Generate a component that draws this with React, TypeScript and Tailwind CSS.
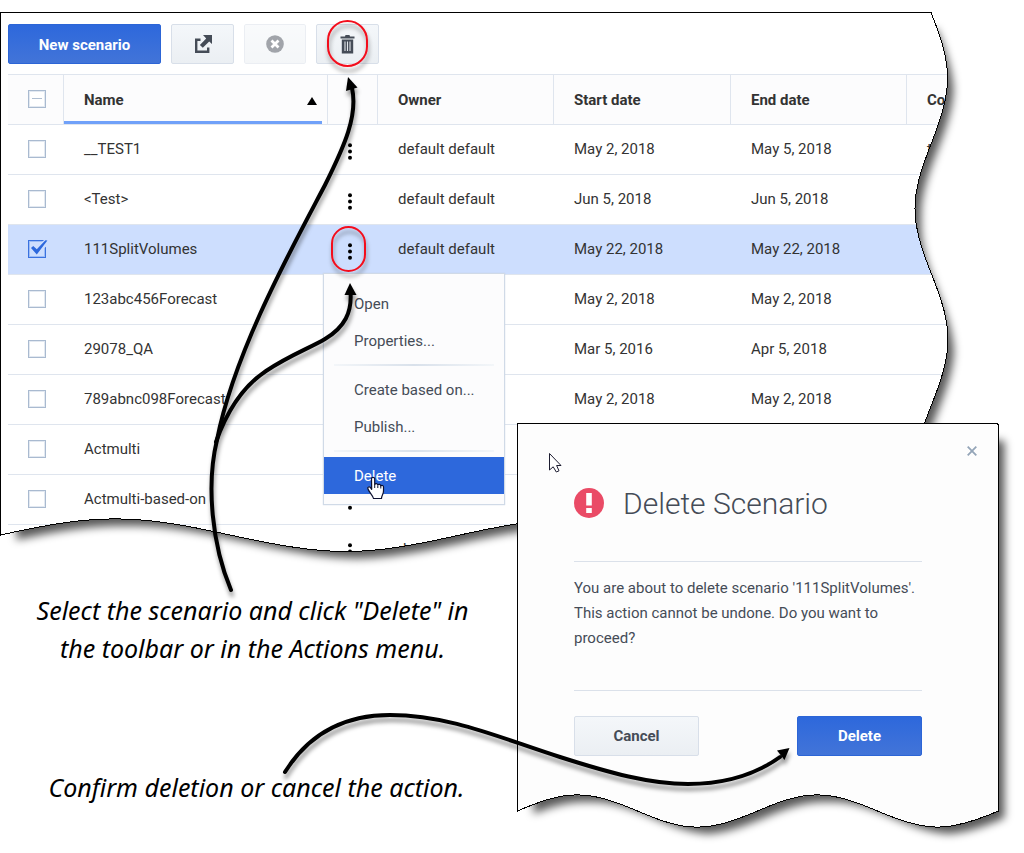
import { Fragment } from 'react';
import clsx from 'clsx';

interface Scenario {
  name: string;
  owner: string;
  start: string;
  end: string;
  comment?: string;
  selected?: boolean;
}

const scenarios: Scenario[] = [
  { name: '__TEST1', owner: 'default default', start: 'May 2, 2018', end: 'May 5, 2018', comment: 't' },
  { name: '<Test>', owner: 'default default', start: 'Jun 5, 2018', end: 'Jun 5, 2018' },
  { name: '111SplitVolumes', owner: 'default default', start: 'May 22, 2018', end: 'May 22, 2018', selected: true },
  { name: '123abc456Forecast', owner: '', start: 'May 2, 2018', end: 'May 2, 2018' },
  { name: '29078_QA', owner: '', start: 'Mar 5, 2016', end: 'Apr 5, 2018' },
  { name: '789abnc098Forecast', owner: '', start: 'May 2, 2018', end: 'May 2, 2018' },
  { name: 'Actmulti', owner: '', start: '', end: '' },
  { name: 'Actmulti-based-on', owner: '', start: '', end: '' },
  { name: '', owner: 'default default', start: '', end: '' },
];

const menuGroups = [['Open', 'Properties...'], ['Create based on...', 'Publish...'], ['Delete']];

// torn paper outlines, waves run along the right and bottom edges
const SHEET =
  'M0.5 12.5 H931 C953 67 953 88 931.5 143 C909.5 198 909.5 219 931.5 274 C953.5 329 953.5 350 931.5 405 C909.5 460 909.5 481 931.5 535 H920 C823 556.5 787 556.5 690 535 C593 513.5 557 513.5 460 535 C363 556.5 333 557.5 230 535 C133 513.5 97 513.5 0.5 535 Z';
const DIALOG =
  'M0.5 0.5 H480 L481.5 2 V388 C431 409.5 410 409.5 360.5 388 C310 366.5 290 366.5 240.5 388 C190 409.5 170 409.5 120.5 388 C70 366.5 50 366.5 0.5 388 Z';

const primaryBtn =
  'h-10 rounded-xs border border-[#2c65d6] bg-linear-to-b from-[#2d68dc] to-[#4274d8] text-[15px] font-bold text-white';
const plainBtn =
  'h-10 rounded-xs border border-[#d8dfe9] bg-linear-to-b from-[#f4f7fa] to-[#ebeff3] text-[15px] font-bold text-[#454c57]';

function PaperShadow({ d, id, className }: { d: string; id: string; className: string }) {
  return (
    <svg className={clsx('pointer-events-none absolute top-0 left-0 overflow-visible', className)} aria-hidden="true">
      <defs>
        <clipPath id={id}>
          <path d={d} />
        </clipPath>
        <filter id={`${id}-shadow`} x="-10%" y="-10%" width="120%" height="120%">
          <feMorphology operator="erode" radius="5" />
          <feOffset dx="11" dy="12" />
          <feGaussianBlur stdDeviation="4" />
        </filter>
      </defs>
      <path d={d} fill="#000" fillOpacity="0.65" filter={`url(#${id}-shadow)`} />
      <path d={d} fill="#fff" />
    </svg>
  );
}

function PaperEdge({ d, className }: { d: string; className: string }) {
  return (
    <svg className={clsx('pointer-events-none absolute top-0 left-0 overflow-visible', className)} aria-hidden="true">
      <path d={d} fill="none" stroke="#000" shapeRendering="crispEdges" />
    </svg>
  );
}

function OpenIcon() {
  return (
    <svg width="18" height="18" viewBox="1 0 18 18" aria-hidden="true">
      <path d="M7.5 4.7H3.2V16.7H15.2V12.5" fill="none" stroke="#454c57" strokeWidth="2.4" />
      <path d="M10 0H19V9L16.2 6.6L9.8 12.8L6.9 9.9L13.2 3.6Z" fill="#454c57" />
    </svg>
  );
}

function CancelIcon() {
  return (
    <svg width="18" height="18" viewBox="0 0 18 18" aria-hidden="true">
      <circle cx="9" cy="9" r="8.8" fill="#454c57" />
      <path d="M5.5 5.5L12.5 12.5M12.5 5.5L5.5 12.5" stroke="#fff" strokeWidth="2.8" />
    </svg>
  );
}

function TrashIcon() {
  return (
    <svg width="15" height="20" viewBox="0 0 15 20" aria-hidden="true">
      <path d="M0.5 2.5H5L5.5 1H9.5L10 2.5H14.5V4.5H0.5Z" fill="#454c57" />
      <path d="M1.8 5.5H13.2V19.5H1.8Z" fill="#454c57" />
      <path d="M5 7.5V17M7.5 7.5V17M10 7.5V17" stroke="#e4e8ec" strokeWidth="1.1" />
    </svg>
  );
}

function Checkbox({ label, checked, mixed }: { label: string; checked?: boolean; mixed?: boolean }) {
  return (
    <span className="relative mb-0.5 ml-5 block size-[18px]">
      <input
        type="checkbox"
        aria-label={label}
        defaultChecked={checked}
        className="block size-[18px] appearance-none border border-[#a9bad0] bg-white shadow-[inset_0_0_0_1px_#e3e9f1] checked:border-[#3a72e0] checked:bg-transparent checked:shadow-[inset_0_0_0_1px_#9dbcf5]"
      />
      {mixed && <span className="pointer-events-none absolute top-2 left-1 h-px w-[10px] bg-[#b0bfd2]" />}
      {checked && (
        <svg className="pointer-events-none absolute top-0 left-0 overflow-visible" width="20" height="18" viewBox="0 0 20 18" aria-hidden="true">
          <path d="M13 3L17 -1H19V6L15 9Z" fill="#cddefe" />
          <path d="M3 8L5.2 6L8.8 9.2L17.4 0.3L19.4 0.6L8.8 14.5Z" fill="#2d68dc" />
        </svg>
      )}
    </span>
  );
}

function ActionsMenu() {
  return (
    <div role="menu" className="absolute top-12 left-[-5px] z-10 w-[182px] border border-[#d0dae7] bg-[#fcfcfd] pt-[11px] pb-[10px] shadow-[0_0_1px_#c5d0df]">
      {menuGroups.map((group, i) => (
        <Fragment key={group[0]}>
          {i > 0 && <div className="mx-[10px] my-[5px] h-[2px] bg-linear-to-r from-[#f3f6f9] via-[#d9e1eb] to-[#f3f6f9]" />}
          {group.map((item) => (
            <button
              key={item}
              type="button"
              role="menuitem"
              className={clsx(
                'block h-[37px] w-full pt-0.5 pl-[30px] text-left text-[15px]',
                item === 'Delete' ? 'bg-[#2d68dc] text-white' : 'text-[#454c57]',
              )}
            >
              {item}
            </button>
          ))}
        </Fragment>
      ))}
    </div>
  );
}

function ScenarioTable() {
  const th = 'h-[50px] border-r border-b border-[#dfe5ee] bg-[#fcfcfd] p-0 text-left font-bold';
  const headText = 'pt-0.5 pl-5';
  const td = 'h-[50px] border-b border-[#dfe5ee] p-0';

  return (
    <table className="mt-[10px] w-full table-fixed border-separate border-spacing-0 border-t border-[#dfe5ee] text-[15px] text-[#333]">
      <colgroup>
        <col className="w-[56px]" />
        <col className="w-[264px]" />
        <col className="w-[50px]" />
        <col className="w-[176px]" />
        <col className="w-[177px]" />
        <col className="w-[176px]" />
        <col />
      </colgroup>
      <thead>
        <tr>
          <th className={th}>
            <Checkbox label="Select all" mixed />
          </th>
          <th className={th}>
            <div className="relative flex h-[49px] items-center justify-between pt-0.5 pr-[10px] pl-5">
              Name
              <svg width="10" height="8" viewBox="0 0 10 8" aria-hidden="true">
                <path d="M5 0L10 8H0Z" fill="#000" />
              </svg>
              <span className="absolute right-[5px] bottom-0 left-0 h-[3px] bg-[#70a1f9]" />
            </div>
          </th>
          <th className={th} aria-label="Actions" />
          <th className={clsx(th, headText)}>Owner</th>
          <th className={clsx(th, headText)}>Start date</th>
          <th className={clsx(th, headText)}>End date</th>
          <th className={clsx(th, headText)}>Co</th>
        </tr>
      </thead>
      <tbody>
        {scenarios.map((s, i) => (
          <tr key={i} className={clsx(s.selected && 'bg-[#cddefe]')}>
            <td className={td}>
              <Checkbox label={`Select ${s.name}`} checked={s.selected} />
            </td>
            <td className={clsx(td, 'pl-5')}>{s.name}</td>
            <td className={td}>
              <div className="relative">
                <button type="button" aria-label="Actions" className="flex h-[49px] w-11 items-center justify-center pt-1">
                  <svg width="4" height="17" viewBox="0 0 4 17" aria-hidden="true">
                    <circle cx="2" cy="2.2" r="2" />
                    <circle cx="2" cy="8.5" r="2" />
                    <circle cx="2" cy="14.8" r="2" />
                  </svg>
                </button>
                {s.selected && <ActionsMenu />}
              </div>
            </td>
            <td className={clsx(td, 'pl-5')}>{s.owner}</td>
            <td className={clsx(td, 'pl-5')}>{s.start}</td>
            <td className={clsx(td, 'pl-5')}>{s.end}</td>
            <td className={clsx(td, 'pl-5')}>{s.comment}</td>
          </tr>
        ))}
      </tbody>
    </table>
  );
}

function DeleteDialog() {
  return (
    <div role="dialog" aria-labelledby="dialog-title" className="absolute top-[423px] left-[517px] z-20 w-[482px]">
      <PaperShadow d={DIALOG} id="dialog-clip" className="h-[405px] w-[482px]" />
      <div className="relative bg-[#fdfdfd] pb-[72px] [clip-path:url(#dialog-clip)]">
        <div className="flex h-14 items-center justify-end pr-[22px]">
          <button type="button" aria-label="Close">
            <svg width="10" height="10" viewBox="0 0 10 10" aria-hidden="true">
              <path d="M0.7 0.7L9.3 9.3M9.3 0.7L0.7 9.3" stroke="#94a5b8" strokeWidth="1.8" />
            </svg>
          </button>
        </div>
        <div className="pr-[77px] pl-[57px]">
          <div className="flex h-12 items-center gap-[19px]">
            <svg width="30" height="30" viewBox="0 0 30 30" aria-hidden="true">
              <circle cx="15" cy="15" r="15" fill="#ea4b66" />
              <path d="M12.2 5H17.8V17.5H12.2ZM12.2 20H17.8V25H12.2Z" fill="#fff" />
            </svg>
            <h2 id="dialog-title" className="text-[30px] font-light text-[#454c57]">Delete Scenario</h2>
          </div>
          <p className="mt-[34px] border-t border-[#dbe1ea] pt-[14px] text-[15px] leading-[25px] text-[#454c57]">
            You are about to delete scenario '111SplitVolumes'. This action cannot be undone. Do you want to proceed?
          </p>
          <div className="mt-[39px] flex justify-between border-t border-[#dbe1ea] pt-[25px]">
            <button type="button" className={clsx(plainBtn, 'w-[125px]')}>Cancel</button>
            <button type="button" className={clsx(primaryBtn, 'w-[125px]')}>Delete</button>
          </div>
        </div>
      </div>
      <PaperEdge d={DIALOG} className="h-[405px] w-[482px]" />
    </div>
  );
}

function Callouts() {
  return (
    <svg className="pointer-events-none absolute top-0 left-0 z-30" width="1024" height="853" viewBox="0 0 1024 853" aria-hidden="true">
      <defs>
        <filter id="soft" x="-20%" y="-20%" width="140%" height="140%">
          <feDropShadow dx="1" dy="5" stdDeviation="2" floodOpacity="0.4" />
        </filter>
      </defs>
      <g fill="none" stroke="#f3101c" strokeWidth="2" filter="url(#soft)">
        <rect x="328" y="21" width="39" height="45" rx="19.5" />
        <rect x="332" y="227" width="33" height="44" rx="16.5" />
      </g>
      <g filter="url(#soft)">
        <g fill="none" stroke="#000" strokeWidth="4" strokeLinecap="round">
          <path d="M231 590 C212 545 206 485 217 440 C234 352 293 246 325 185 C345 145 358 115 352 88" />
          <path d="M216 442 C228 408 245 385 266 371 C290 355 310 348 325 339 C345 327 352 312 350.5 292" />
          <path d="M285 772 C310 732 345 715 390 715 C450 715 500 738 560 757 C610 773 650 784 688 784 C725 784 755 775 780 757" />
        </g>
        <path d="M348 77L357.5 87.5L346 91Z" />
        <path d="M350 283L356.5 295H344.5Z" />
        <path d="M789.5 748L784.5 760L777 750.5Z" />
      </g>
      {/* pointer over the dialog */}
      <path d="M549.5 453.5V470L553.2 466.8L556.3 472L559 470.8L556.6 465.5H561Z" fill="#fff" stroke="#1c1c30" strokeLinejoin="round" />
      {/* hand over the Delete item */}
      <path
        d="M371.5 478.5C371.5 477 374.5 477 374.7 478.5V484.5C375.3 483 377.7 483.3 377.8 485C378.5 483.8 380.6 484.3 380.8 485.8C381.6 485 383.5 485.5 383.5 487V491C383.5 494 381.5 496 381.5 498.5H373.5C373 495.5 368.5 491.5 367.8 488.5C367.5 487 369.5 486.3 370.3 487.3L371.7 489.3Z"
        fill="#fff"
        stroke="#0c1030"
        strokeWidth="1.2"
        strokeLinejoin="round"
      />
      <path d="M374.7 484.5V488M377.8 485.5V488M380.8 486V488.5" stroke="#0c1030" />
    </svg>
  );
}

export default function App() {
  return (
    <main className="relative min-h-screen overflow-hidden bg-white font-['Roboto',sans-serif]">
      <section className="relative">
        <PaperShadow d={SHEET} id="sheet-clip" className="h-[575px] w-full" />
        <div className="relative pt-6 pr-2 pl-2 [clip-path:url(#sheet-clip)]">
          <div className="flex gap-[10px]">
            <button type="button" className={clsx(primaryBtn, 'w-[153px] pt-0.5')}>New scenario</button>
            <button type="button" aria-label="Open" className={clsx(plainBtn, 'flex w-[63px] items-center justify-center')}>
              <OpenIcon />
            </button>
            <button type="button" aria-label="Cancel" disabled className={clsx(plainBtn, 'flex w-[62px] items-center justify-center opacity-50')}>
              <CancelIcon />
            </button>
            <button type="button" aria-label="Delete" className={clsx(plainBtn, 'flex w-[63px] items-center justify-center')}>
              <TrashIcon />
            </button>
          </div>
          <ScenarioTable />
        </div>
        <PaperEdge d={SHEET} className="h-[575px] w-full" />
      </section>

      <div className="w-[505px] pt-4 text-center font-['Segoe_Print','Noto_Sans',sans-serif] text-[25px] leading-[38px] text-black italic">
        <p>
          Select the scenario and click "Delete" in
          <br />
          the toolbar or in the Actions menu.
        </p>
        <p className="mt-[101px] pl-2">Confirm deletion or cancel the action.</p>
      </div>

      <DeleteDialog />
      <Callouts />
    </main>
  );
}
